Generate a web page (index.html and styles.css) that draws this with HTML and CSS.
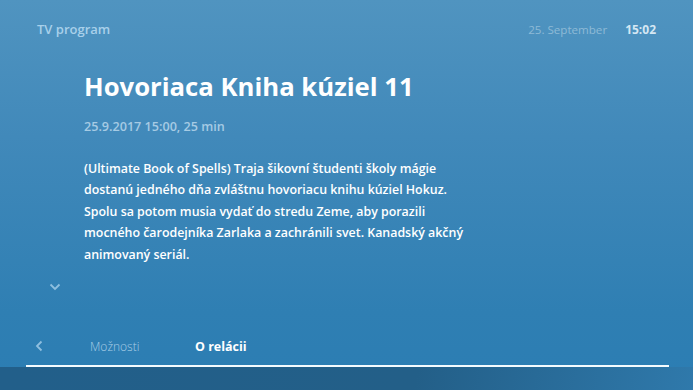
FILE: index.html
```html
<!DOCTYPE html>
<html lang="sk">
<head>
<meta charset="utf-8">
<link rel="stylesheet" href="styles.css">
</head>
<body>
<div class="screen">
  <header class="topbar">
    <div class="app-name">TV program</div>
    <div class="clock">
      <span class="date">25. September</span>
      <span class="time">15:02</span>
    </div>
  </header>
  <main class="detail">
    <h1 class="title">Hovoriaca Kniha kúziel 11</h1>
    <div class="meta">25.9.2017 15:00, 25 min</div>
    <p class="desc">(Ultimate Book of Spells) Traja šikovní študenti školy mágie<br>dostanú jedného dňa zvláštnu hovoriacu knihu kúziel Hokuz.<br>Spolu sa potom musia vydať do stredu Zeme, aby porazili<br>mocného čarodejníka Zarlaka a zachránili svet. Kanadský akčný<br>animovaný seriál.</p>
  </main>
  <div class="more">
    <svg width="12" height="8" viewBox="0 0 12 8"><path d="M1.5 1.5 L6 6 L10.5 1.5" fill="none" stroke="#8fbfdf" stroke-width="1.8"/></svg>
  </div>
  <nav class="tabs">
    <span class="back"><svg width="8" height="12" viewBox="0 0 8 12"><path d="M6.5 1.5 L2 6 L6.5 10.5" fill="none" stroke="#8fbfdf" stroke-width="1.8"/></svg></span>
    <span class="tab">Možnosti</span>
    <span class="tab active">O relácii</span>
  </nav>
  <div class="rule"></div>
  <div class="footer"></div>
</div>
</body>
</html>
```
FILE: styles.css
```css
html, body {
  margin: 0;
  padding: 0;
}
body {
  width: 693px;
  height: 390px;
  overflow: hidden;
  font-family: "Open Sans", "DejaVu Sans", sans-serif;
}
.screen {
  width: 693px;
  height: 390px;
  display: flex;
  flex-direction: column;
  background: linear-gradient(180deg, #5094c0 0%, #4189ba 35%, #2f7fb3 80%, #2b7db3 100%);
}
.topbar {
  display: flex;
  justify-content: space-between;
  align-items: center;
  height: 58px;
  padding: 0 37px;
  box-sizing: border-box;
}
.app-name {
  color: #a8d0ea;
  font-size: 13px;
  font-weight: 600;
}
.clock {
  display: flex;
  align-items: baseline;
  gap: 18px;
  font-size: 12px;
}
.date {
  color: #8ebad6;
  font-weight: 400;
  font-size: 11.6px;
}
.time {
  color: #d4e7f3;
  font-weight: 700;
}
.detail {
  padding: 0 0 0 84px;
}
.title {
  margin: 11px 0 0;
  color: #ffffff;
  font-size: 25.7px;
  font-weight: 700;
  line-height: 36px;
  letter-spacing: 0;
}
.meta {
  margin-top: 13px;
  color: #a6cbe4;
  font-size: 12.6px;
  font-weight: 600;
}
.desc {
  margin: 23px 0 0;
  color: #ffffff;
  font-size: 12.4px;
  font-weight: 600;
  line-height: 21.4px;
}
.more {
  padding: 9px 0 0 49px;
  height: 18px;
}
.tabs {
  display: flex;
  align-items: center;
  margin-top: 44px;
  padding-left: 35px;
  height: 20px;
  font-size: 12px;
}
.back {
  width: 55px;
  display: flex;
}
.tab {
  color: #a8cde6;
  font-weight: 300;
  width: 105px;
}
.tab.active {
  color: #ffffff;
  font-weight: 700;
  font-size: 12.5px;
}
.rule {
  margin: 9px 24px 0 26px;
  height: 2px;
  background: #f4fbff;
  box-shadow: 0 1px 1px rgba(10, 40, 70, 0.6);
}
.footer {
  flex: 1;
  background: linear-gradient(100deg, #225f8a 0%, #235f88 60%, #2f79ab 100%);
}
```
